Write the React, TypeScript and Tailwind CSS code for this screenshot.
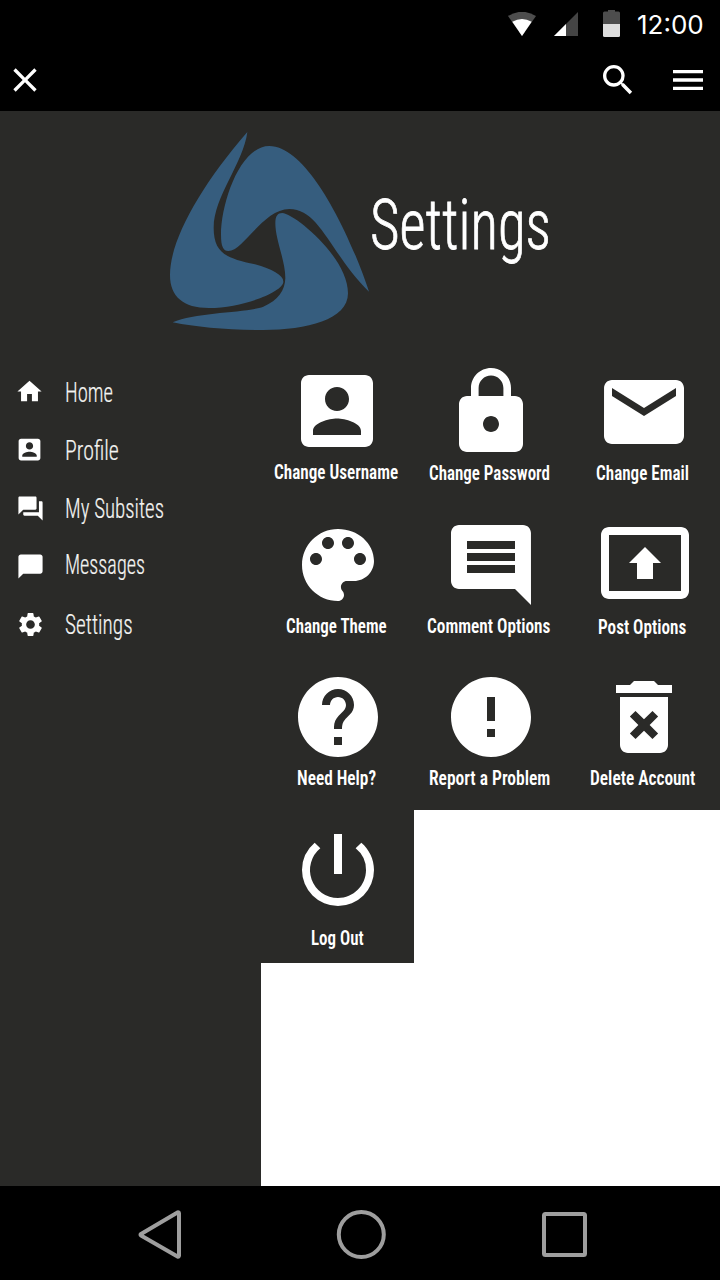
import { useLayoutEffect, useRef, useState } from "react";
import type { ComponentType } from "react";
import {
  MdChatBubble,
  MdClose,
  MdComment,
  MdDeleteForever,
  MdEmail,
  MdError,
  MdHelp,
  MdHome,
  MdLock,
  MdMenu,
  MdPowerSettingsNew,
  MdPresentToAll,
  MdQuestionAnswer,
  MdSearch,
  MdSettings,
} from "react-icons/md";

type IconProps = { size?: string | number; className?: string };

function AccountBoxIcon({ size, className }: IconProps) {
  return (
    <svg width={size} height={size} viewBox="0 0 24 24" fill="currentColor" className={className}>
      <path d="M3 5v14c0 1.100.89 2 2 2h14c1.100 0 2-.9 2-2V5c0-1.100-.9-2-2-2H5c-1.110 0-2 .9-2 2zm12 4c0 1.660-1.340 3-3 3s-3-1.340-3-3 1.340-3 3-3 3 1.340 3 3zm-9 8c0-2 4-3.100 6-3.100s6 1.100 6 3.100v1H6v-1z" />
    </svg>
  );
}

function PaletteIcon({ size, className }: IconProps) {
  return (
    <svg width={size} height={size} viewBox="0 0 24 24" fill="currentColor" className={className}>
      <path d="M12 3c-4.970 0-9 4.030-9 9s4.030 9 9 9c.83 0 1.500-.67 1.500-1.500 0-.39-.15-.74-.39-1.010-.23-.26-.38-.61-.38-.99 0-.83.67-1.500 1.500-1.500H16c2.760 0 5-2.240 5-5 0-4.420-4.030-8-9-8zm-5.500 9c-.83 0-1.500-.67-1.500-1.500S5.670 9 6.500 9 8 9.670 8 10.500 7.330 12 6.500 12zm3-4C8.670 8 8 7.330 8 6.500S8.670 5 9.500 5s1.500.67 1.500 1.500S10.330 8 9.500 8zm5 0c-.83 0-1.500-.67-1.500-1.500S13.670 5 14.500 5s1.500.67 1.500 1.500S15.330 8 14.500 8zm3 4c-.83 0-1.500-.67-1.500-1.500S16.670 9 17.500 9s1.500.67 1.500 1.500-.67 1.500-1.500 1.500z" />
    </svg>
  );
}

/** Condenses a line of text horizontally so that it fills the given width. */
function Condensed({ text, width, className }: { text: string; width: number; className: string }) {
  const ref = useRef<HTMLSpanElement>(null);
  const [scale, setScale] = useState(1);
  useLayoutEffect(() => {
    if (ref.current) setScale(width / ref.current.offsetWidth);
  }, [text, width]);
  return (
    <span className="block" style={{ width }}>
      <span
        ref={ref}
        className={`inline-block origin-left whitespace-nowrap align-top font-stretch-75% ${className}`}
        style={{ transform: `scaleX(${scale})` }}
      >
        {text}
      </span>
    </span>
  );
}

function StatusBar() {
  return (
    <div className="flex h-[49px] items-start justify-end bg-black pr-[16px] text-white">
      <svg className="mt-[12px] h-[24px] w-[28px]" viewBox="0 0 28 24">
        <path d="M0 4Q14 -4.500 28 4L14 24Z" fill="#4d4d4d" />
        <path d="M4.300 9.700Q14 4.500 23.700 9.700L14 24Z" fill="#fff" />
      </svg>
      <svg className="mt-[12px] ml-[18px] h-[24px] w-[24px]" viewBox="0 0 24 24">
        <path d="M24 0V24H0Z" fill="#444" />
        <path d="M12 12V24H0Z" fill="#fff" />
      </svg>
      <svg className="mt-[10px] ml-[25px] h-[27px] w-[17px]" viewBox="0 0 17 27">
        <path d="M0 14V3Q0 1.500 1.500 1.500H5V0H12V1.500H15.500Q17 1.500 17 3V14Z" fill="#4d4d4d" />
        <path d="M0 14H17V25.500Q17 27 15.500 27H1.500Q0 27 0 25.500Z" fill="#ddd" />
      </svg>
      <span className="mt-[9px] ml-[17px] w-[67px] font-['Inter',sans-serif] text-[26px] leading-[32px] font-[370] whitespace-nowrap">
        12:00
      </span>
    </div>
  );
}

function Header() {
  return (
    <header className="flex h-[62px] items-center bg-black pr-[12px] pl-[5px] text-white">
      <MdClose size={40} />
      <MdSearch size={40} className="ml-auto" />
      <MdMenu size={40} className="ml-[30px]" />
    </header>
  );
}

function Logo() {
  return (
    <svg className="h-[220px] w-[220px] shrink-0" viewBox="0 0 660 660" fill="#365d7e">
      <path d="M262 36C250 130 161 230 161 323C161 400 200 415 285 433C335 447 370 465 370 485C370 515 250 564 147 564C70 564 30 530 30 465C30 360 120 200 262 36Z" />
      <path d="M627 515C580 370 450 78 328 78C240 78 183 250 183 345C183 380 190 393 205 393C250 393 310 267 388 267C480 267 510 400 627 515Z" />
      <path d="M38 607C110 575 255 580 310 560C355 542 375 510 376 475C376 420 346 360 346 310C346 288 353 279 367 279C400 279 564 410 564 520C564 600 440 630 310 630C200 630 110 622 38 607Z" />
    </svg>
  );
}

type Entry = { label: string; width: number; Icon: ComponentType<IconProps>; icon: string; text: string };

const menu: (Entry & { row: string })[] = [
  { label: "Home", width: 48, Icon: MdHome, row: "h-[58px]", icon: "mt-[11px]", text: "mt-[14px]" },
  { label: "Profile", width: 54, Icon: AccountBoxIcon, row: "h-[58px]", icon: "mt-[11px]", text: "mt-[14px]" },
  { label: "My Subsites", width: 99, Icon: MdQuestionAnswer, row: "h-[57px]", icon: "mt-[12px] ml-[0.5px]", text: "mt-[14px]" },
  { label: "Messages", width: 80, Icon: MdChatBubble, row: "h-[59px]", icon: "mt-[13px] ml-[0.5px]", text: "mt-[13px]" },
  { label: "Settings", width: 68, Icon: MdSettings, row: "h-[58px]", icon: "mt-[12px] ml-[0.5px]", text: "mt-[14px]" },
];

function Sidebar() {
  return (
    <nav className="w-[261px] shrink-0 bg-[#2a2a28] pt-[15px]">
      {menu.map(({ label, width, Icon, row, icon, text }) => (
        <div key={label} className={`flex items-start pl-[15px] ${row}`}>
          <div className="w-[50px] shrink-0">
            <Icon size={29} className={`text-white ${icon}`} />
          </div>
          <div className={text}>
            <Condensed
              text={label}
              width={width}
              className="font-['Roboto',sans-serif] text-[27.5px] leading-[26px] font-light text-[#f4f4f2] [-webkit-text-stroke:0.2px_#f4f4f2]"
            />
          </div>
        </div>
      ))}
    </nav>
  );
}

const tiles: Entry[] = [
  { label: "Change Username", width: 124, Icon: AccountBoxIcon, icon: "mt-[12px] ml-[28px]", text: "mt-px ml-[13px]" },
  { label: "Change Password", width: 121, Icon: MdLock, icon: "mt-[13px] ml-[29px]", text: "mt-px ml-[15px]" },
  { label: "Change Email", width: 93, Icon: MdEmail, icon: "mt-[13px] ml-[29px]", text: "mt-px ml-[29px]" },
  { label: "Change Theme", width: 101, Icon: PaletteIcon, icon: "mt-[13px] ml-[29px]", text: "mt-px ml-[25px]" },
  { label: "Comment Options", width: 123, Icon: MdComment, icon: "mt-[13px] ml-[29px]", text: "mt-px ml-[13px]" },
  { label: "Post Options", width: 88, Icon: MdPresentToAll, icon: "mt-[11px] ml-[30px]", text: "mt-[4px] ml-[31px]" },
  { label: "Need Help?", width: 79, Icon: MdHelp, icon: "mt-[12px] ml-[29px]", text: "mt-px ml-[36px]" },
  { label: "Report a Problem", width: 121, Icon: MdError, icon: "mt-[12px] ml-[29px]", text: "mt-px ml-[15px]" },
  { label: "Delete Account", width: 105, Icon: MdDeleteForever, icon: "mt-[12px] ml-[29px]", text: "mt-px ml-[23px]" },
  { label: "Log Out", width: 53, Icon: MdPowerSettingsNew, icon: "mt-[12px] ml-[29px]", text: "mt-[8px] ml-[50px]" },
];

function Tiles() {
  return (
    <main className="grid grow auto-rows-[153px] grid-cols-3 content-start bg-white">
      {tiles.map(({ label, width, Icon, icon, text }) => (
        <div key={label} className="flex flex-col items-start bg-[#2a2a28] text-white">
          <Icon size={96} className={`shrink-0 ${icon}`} />
          <div className={text}>
            <Condensed
              text={label}
              width={width}
              className="font-['Roboto',sans-serif] text-[19.5px] leading-[26px] font-semibold"
            />
          </div>
        </div>
      ))}
    </main>
  );
}

function NavigationBar() {
  return (
    <footer className="flex h-[94px] items-center bg-black pt-[2px] pl-[137px]">
      <svg className="h-[52px] w-[46px]" viewBox="0 0 46 52" fill="none" stroke="#9e9e9e" strokeWidth="4" strokeLinejoin="round">
        <path d="M4 26L40.500 4.500Q42 4 42 5.500V47.500Q42 49 40.500 48.500L4 27.500Q3 26.700 4 26Z" />
      </svg>
      <svg className="ml-[152px] h-[52px] w-[52px]" viewBox="0 0 52 52" fill="none" stroke="#9e9e9e" strokeWidth="4">
        <circle cx="26.300" cy="26.500" r="22.500" />
      </svg>
      <svg className="ml-[153px] h-[52px] w-[48px]" viewBox="0 0 48 52" fill="none" stroke="#9e9e9e" strokeWidth="4">
        <rect x="4" y="6" width="41" height="41" rx="1.500" />
      </svg>
    </footer>
  );
}

export default function App() {
  return (
    <div className="flex h-[1280px] w-[720px] flex-col overflow-hidden bg-[#2a2a28]">
      <StatusBar />
      <Header />
      <div className="flex h-[240px] shrink-0 items-start pt-[9px] pl-[160px]">
        <Logo />
        <h1 className="mt-[63px] ml-[-10px]">
          <Condensed
            text="Settings"
            width={181}
            className="font-['Roboto',sans-serif] text-[71px] leading-[84px] font-light text-white [-webkit-text-stroke:0.8px_white]"
          />
        </h1>
      </div>
      <div className="flex grow">
        <Sidebar />
        <Tiles />
      </div>
      <NavigationBar />
    </div>
  );
}
